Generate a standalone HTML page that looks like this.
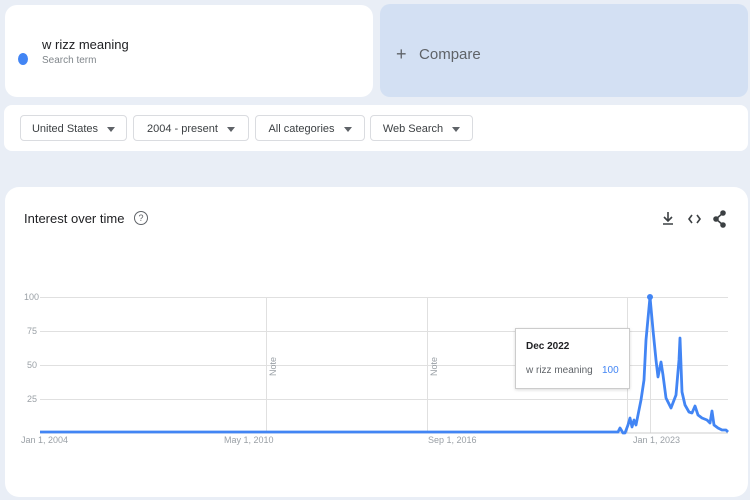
<!DOCTYPE html>
<html><head><style>
body{margin:0;width:750px;height:500px;background:#e9eef6;font-family:"Liberation Sans",sans-serif;position:relative;overflow:hidden}
.card{position:absolute;background:#fff;border-radius:12px}
.btn{position:absolute;top:115px;height:26px;border:1px solid #dadce0;border-radius:4px;background:#fff;font-size:11px;color:#3c4043;line-height:26px;box-sizing:border-box;text-align:center}
.btn:after{content:"";display:inline-block;margin-left:9px;border-left:4px solid transparent;border-right:4px solid transparent;border-top:5px solid #5f6368;vertical-align:middle}
.lbl{position:absolute;font-size:9px;color:#9aa0a6}
.note{position:absolute;font-size:9px;color:#9aa0a6;transform:rotate(-90deg);transform-origin:left top}
</style></head><body>
<div class="card" style="left:5px;top:5px;width:368px;height:92px"></div>
<div style="position:absolute;left:18px;top:53px;width:10px;height:12px;border-radius:50%;background:#4285f4"></div>
<div style="position:absolute;left:42px;top:37px;font-size:13px;color:#202124">w rizz meaning</div>
<div style="position:absolute;left:42px;top:55px;font-size:10px;color:#80868b">Search term</div>
<div style="position:absolute;left:380px;top:4px;width:368px;height:93px;background:#d3e0f3;border-radius:10px"></div>
<div style="position:absolute;left:396px;top:43px;font-size:15px;color:#5f6368"><span style="font-size:18px;font-weight:300;position:relative;top:1px">+</span>&nbsp;&nbsp;&nbsp;Compare</div>
<div class="card" style="left:4px;top:105px;width:744px;height:46px;border-radius:8px"></div>
<div class="btn" style="left:20px;width:107px">United States</div>
<div class="btn" style="left:133px;width:116px">2004 - present</div>
<div class="btn" style="left:255px;width:110px">All categories</div>
<div class="btn" style="left:370px;width:103px">Web Search</div>
<div class="card" style="left:5px;top:187px;width:743px;height:310px;border-radius:14px"></div>
<div style="position:absolute;left:24px;top:211px;font-size:13px;color:#202124">Interest over time</div>
<div style="position:absolute;left:134px;top:211px;width:12px;height:12px;border:1.3px solid #5f6368;border-radius:50%;font-size:9px;line-height:12px;text-align:center;color:#5f6368">?</div>
<svg style="position:absolute;left:0;top:0" width="750" height="500">
<g stroke="#3c4043" stroke-width="1.6" fill="none">
<path d="M668 212v9M664 217l4 4 4-4M663 224h10"/>
<path d="M692 215l-3 4 3 4M697 215l3 4-3 4"/>
<circle cx="723" cy="213" r="2" fill="#3c4043"/><circle cx="716" cy="219" r="2" fill="#3c4043"/><circle cx="723" cy="225" r="2" fill="#3c4043"/>
<path d="M723 213l-7 6 7 6"/>
</g>
<g stroke="#e0e0e0" stroke-width="1">
<path d="M40 297.5H728M40 331.5H728M40 365.5H728M40 399.5H728"/>
<path d="M266.5 297V433M427.5 297V433M627.5 297V433M650.5 297V433"/>
</g>
<path d="M40 433H728" stroke="#ccc" stroke-width="1"/>
<path d="M40 432H618L620 428L623 433L625 433L628 425L630 418L632 427L634 420L636 425L638 415L641 400L644 380L646 340L650 297L653 330L656 360L658 377L661 362L663 375L666 398L671 408L676 395L679 360L680 338L682 392L685 405L689 412L692 413L695 406L698 415L702 418L707 420L710 423L712 411L714 425L718 428L722 430L726 430L728 432" fill="none" stroke="#4285f4" stroke-width="2.8" stroke-linejoin="round"/>
<circle cx="650" cy="297" r="3" fill="#4285f4"/>
</svg>
<div class="lbl" style="left:24px;top:292px">100</div>
<div class="lbl" style="left:27px;top:326px">75</div>
<div class="lbl" style="left:27px;top:360px">50</div>
<div class="lbl" style="left:27px;top:394px">25</div>
<div class="lbl" style="left:21px;top:435px">Jan 1, 2004</div>
<div class="lbl" style="left:224px;top:435px">May 1, 2010</div>
<div class="lbl" style="left:428px;top:435px">Sep 1, 2016</div>
<div class="lbl" style="left:633px;top:435px">Jan 1, 2023</div>
<div class="note" style="left:268px;top:376px">Note</div>
<div class="note" style="left:429px;top:376px">Note</div>
<div style="position:absolute;left:515px;top:328px;width:113px;height:59px;background:#fff;border:1px solid #ccc;box-shadow:0 1px 3px rgba(0,0,0,.15)"></div>
<div style="position:absolute;left:526px;top:341px;font-size:10px;font-weight:bold;color:#202124">Dec 2022</div>
<div style="position:absolute;left:526px;top:365px;font-size:10px;color:#5f6368">w rizz meaning</div>
<div style="position:absolute;left:602px;top:365px;font-size:10px;color:#4285f4">100</div>
</body></html>
